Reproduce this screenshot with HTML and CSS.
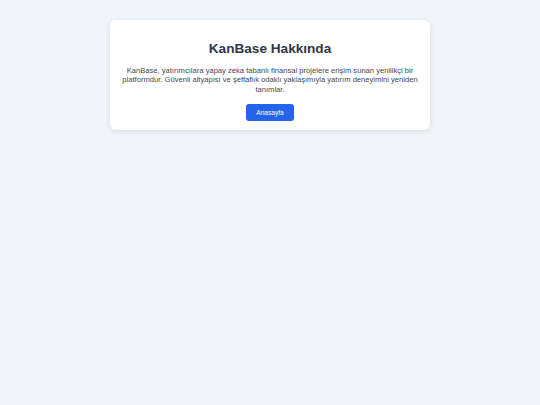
FILE: index.html
```html
<!DOCTYPE html>
<html lang="tr">
<head>
<meta charset="utf-8">
<title>KanBase Hakkında</title>
<link rel="stylesheet" href="styles.css">
</head>
<body>
<main class="card">
  <h1 class="title">KanBase Hakkında</h1>
  <p class="text">KanBase, yatırımcılara yapay zeka tabanlı finansal projelere erişim sunan yenilikçi bir platformdur. Güvenli altyapısı ve şeffaflık odaklı yaklaşımıyla yatırım deneyimini yeniden tanımlar.</p>
  <a class="btn" href="#">Anasayfa</a>
</main>
</body>
</html>
```
FILE: styles.css
```css
html, body {
  margin: 0;
  padding: 0;
}
body {
  background: #f0f4f8;
  font-family: "Liberation Sans", Arial, sans-serif;
  color: #2d3748;
  padding-top: 20px;
  min-height: 405px;
  box-sizing: border-box;
}
.card {
  width: 320px;
  box-sizing: border-box;
  margin: 0 auto;
  background: #ffffff;
  border-radius: 6px;
  box-shadow: 0 1px 5px rgba(0, 0, 0, 0.1);
  padding: 20px 10px 8px;
  text-align: center;
}
.title {
  margin: 0 0 9px;
  font-size: 13.6px;
  line-height: 17px;
  font-weight: 700;
  color: #2d3748;
}
.text {
  margin: 0 0 10px;
  font-size: 7.6px;
  line-height: 9.3px;
  color: #3f4753;
}
.btn {
  display: inline-block;
  background: #2563eb;
  color: #ffffff;
  text-decoration: none;
  font-size: 6.6px;
  line-height: 17px;
  height: 17px;
  padding: 0 10.5px;
  border-radius: 3px;
  vertical-align: top;
}
```
